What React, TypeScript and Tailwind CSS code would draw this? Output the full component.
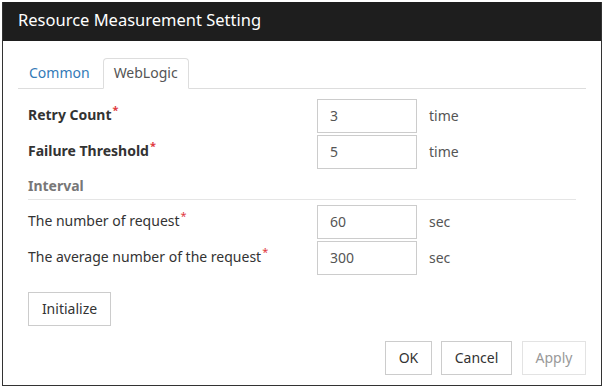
import React from "react";

const font = { fontFamily: '"Noto Sans", "Liberation Sans", Arial, sans-serif' };

function Req() {
  return <span className="relative top-[-6px] ml-[1px] text-[11px] leading-none text-[#e0393e]">*</span>;
}

function Row({ label, value, unit, bold }: { label: string; value: string; unit: string; bold?: boolean }) {
  return (
    <div className="flex h-[34px] items-center">
      <div className={`w-[289px] pb-[2px] text-[14px] leading-none text-[#333] ${bold ? "font-bold" : ""}`}>
        {label}
        <Req />
      </div>
      <div className="flex h-[34px] w-[100px] items-center border border-[#ccc] pb-[2px] pl-[12px] text-[14px] text-[#555]">
        {value}
      </div>
      <div className="ml-[12px] pb-[2px] text-[14px] text-[#555]">{unit}</div>
    </div>
  );
}

function Btn({ children, w, disabled }: { children: React.ReactNode; w: string; disabled?: boolean }) {
  return (
    <div
      className={`flex h-[34px] items-center justify-center border bg-white pb-[2px] text-[14px] ${w} ${
        disabled ? "border-[#e3e3e3] text-[#999]" : "border-[#ccc] text-[#333]"
      }`}
    >
      {children}
    </div>
  );
}

export default function App() {
  return (
    <div className="h-[388px] w-[604px] bg-white pl-[2px] pt-[2px]" style={font}>
      <div className="flex h-[384px] w-[600px] flex-col border-x border-b border-[#333]">
        <div className="flex h-[39px] shrink-0 items-center bg-[#1e1e1e] pb-[2px] pl-[15px] text-[16.5px] text-white">
          Resource Measurement Setting
        </div>
        <div className="flex flex-1 flex-col px-[15px] pt-[17px] pb-[10px]">
          <div className="flex h-[31px] border-b border-[#ddd]">
            <div className="mr-[2px] flex h-[31px] items-center border border-transparent px-[10px] pb-[2px] text-[14px] text-[#337ab7]">
              Common
            </div>
            <div className="flex h-[31px] items-center rounded-t-[4px] border border-b-white border-[#ddd] bg-white px-[10px] pb-[2px] text-[14px] text-[#555]">
              WebLogic
            </div>
          </div>
          <div className="flex flex-col px-[10px] pt-[10px]">
            <div className="flex flex-col gap-[2px]">
              <Row label="Retry Count" value="3" unit="time" bold />
              <Row label="Failure Threshold" value="5" unit="time" bold />
            </div>
            <div className="flex h-[31px] items-center border-b border-[#e5e5e5] pt-[3px] text-[14px] font-bold text-[#777]">
              Interval
            </div>
            <div className="mt-[5px] flex flex-col gap-[2px]">
              <Row label="The number of request" value="60" unit="sec" />
              <Row label="The average number of the request" value="300" unit="sec" />
            </div>
            <div className="mt-[17px] flex">
              <Btn w="w-[83px]">Initialize</Btn>
            </div>
          </div>
          <div className="mt-auto flex justify-end">
            <Btn w="w-[47px]">OK</Btn>
            <div className="ml-[9px]">
              <Btn w="w-[71px]">Cancel</Btn>
            </div>
            <div className="ml-[10px]">
              <Btn w="w-[64px]" disabled>
                Apply
              </Btn>
            </div>
          </div>
        </div>
      </div>
    </div>
  );
}
